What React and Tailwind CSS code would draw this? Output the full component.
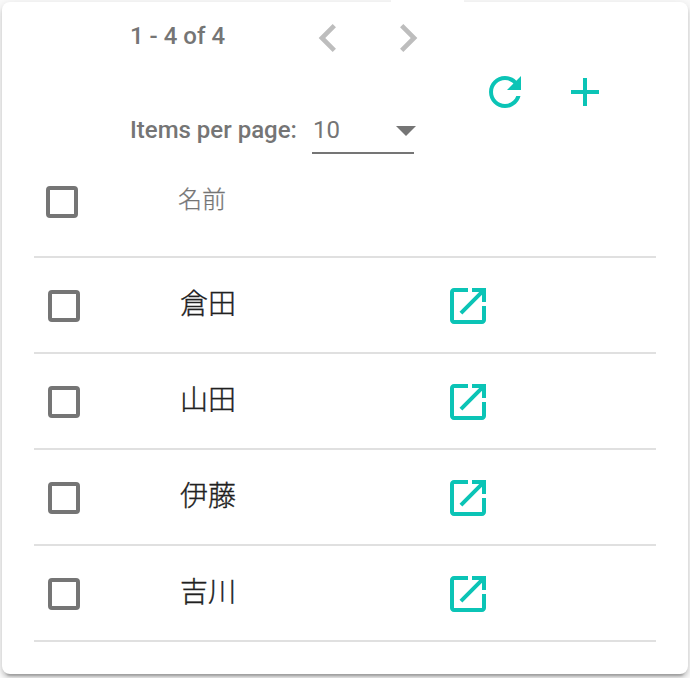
const names = ['倉田', '山田', '伊藤', '吉川'];

function Icon({ d, className }) {
  return (
    <svg viewBox="0 0 24 24" fill="currentColor" className={`block shrink-0 ${className}`}>
      <path d={d} />
    </svg>
  );
}

const icons = {
  prev: 'M15.41 7.41L14 6l-6 6 6 6 1.41-1.41L10.83 12z',
  next: 'M10 6L8.59 7.41 13.17 12l-4.58 4.59L10 18l6-6z',
  refresh:
    'M17.65 6.35C16.2 4.9 14.21 4 12 4c-4.42 0-7.99 3.58-7.99 8s3.57 8 7.99 8c3.73 0 6.84-2.55 7.73-6h-2.08c-.82 2.33-3.04 4-5.65 4-3.31 0-6-2.69-6-6s2.69-6 6-6c1.66 0 3.14.69 4.22 1.78L13 11h7V4l-2.35 2.35z',
  add: 'M19 13h-6v6h-2v-6H5v-2h6V5h2v6h6v2z',
  open: 'M19 19H5V5h7V3H5c-1.11 0-2 .9-2 2v14c0 1.1.89 2 2 2h14c1.1 0 2-.9 2-2v-7h-2v7zM14 3v2h3.59l-9.83 9.83 1.41 1.41L19 6.41V10h2V3h-7z',
  caret: 'M7 10l5 5 5-5z',
};

function Checkbox({ className }) {
  return (
    <span
      role="checkbox"
      aria-checked="false"
      className={`block size-8 shrink-0 rounded-[4px] border-4 border-[#757575] ${className}`}
    />
  );
}

function Toolbar() {
  return (
    <div className="flex h-[154px] items-start pl-24">
      <div className="flex w-[350px] flex-col text-2xl font-medium text-[#757575]">
        <div className="flex h-[72px] items-start">
          <span className="w-[170px] pt-[18px] leading-8">1 - 4 of 4</span>
          <Icon d={icons.prev} className="mt-2 size-14 text-[#bdbdbd]" />
          <Icon d={icons.next} className="mt-2 ml-6 size-14 text-[#bdbdbd]" />
        </div>
        <div className="flex h-20 items-end">
          <span className="mb-2 w-[182px] leading-8 whitespace-nowrap">Items per page:</span>
          <div className="flex h-12 w-[102px] items-center justify-between border-b-2 border-[#757575] pt-0.5 font-normal">
            <span className="pl-px leading-8">10</span>
            <Icon d={icons.caret} className="-mr-4 size-12" />
          </div>
        </div>
      </div>
      <div className="flex gap-8 pt-[66px] pl-px text-[#0bc4b6]">
        <Icon d={icons.refresh} className="size-12" />
        <Icon d={icons.add} className="size-12" />
      </div>
    </div>
  );
}

export default function App() {
  return (
    <div className="h-[678px] w-[690px] overflow-hidden bg-[#fafafa] p-0.5 font-[Roboto,'Noto_Sans_CJK_JP',sans-serif]">
      <div className="relative h-[672px] w-[686px] rounded-[8px] bg-white px-8 shadow-[0_6px_2px_-4px_rgba(0,0,0,0.2),0_4px_4px_0_rgba(0,0,0,0.14),0_2px_10px_0_rgba(0,0,0,0.12)]">
        <div className="absolute -top-0.5 left-[389px] h-0.5 w-[73px] bg-white" />
        <Toolbar />
        <div className="flex h-[102px] items-start border-b-2 border-[#e0e0e0] pt-[30px] pl-3">
          <Checkbox className="" />
          <span className="-mt-[2px] ml-[100px] text-2xl font-light text-[#757575] [-webkit-text-stroke:0.25px]">名前</span>
        </div>
        {names.map((name) => (
          <div key={name} className="flex h-24 items-center border-b-2 border-[#e0e0e0] pl-3.5">
            <Checkbox className="mt-0.5" />
            <span className="ml-[100px] w-[264px] text-[28px] leading-10 font-light text-[#212121] [-webkit-text-stroke:0.35px]">
              {name}
            </span>
            <Icon d={icons.open} className="mt-0.5 size-12 text-[#0bc4b6]" />
          </div>
        ))}
      </div>
    </div>
  );
}
